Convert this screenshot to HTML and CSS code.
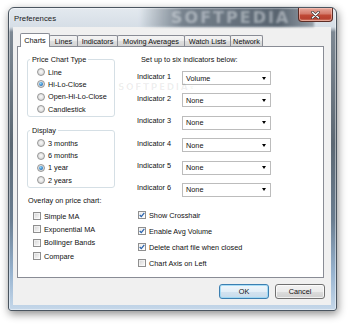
FILE: index.html
```html
<!DOCTYPE html>
<html>
<head>
<meta charset="utf-8">
<title>Preferences</title>
<link rel="stylesheet" href="styles.css">
</head>
<body>
<div class="window">
  <div class="glass-mark">SOFTPEDIA</div>
  <div class="titlebar">
    <span class="title">Preferences</span>
    <div class="close" aria-label="Close">
      <svg width="9" height="8" viewBox="0 0 9 8"><path d="M1.5 1.2 L7.5 6.8 M7.5 1.2 L1.5 6.8" stroke="#3a3a3a" stroke-width="2.6" stroke-linecap="round"/><path d="M1.5 1.2 L7.5 6.8 M7.5 1.2 L1.5 6.8" stroke="#ffffff" stroke-width="1.4" stroke-linecap="round"/></svg>
    </div>
  </div>
  <div class="client">
    <div class="tabs">
      <div class="tab active t1">Charts</div>
      <div class="tab t2">Lines</div>
      <div class="tab t3">Indicators</div>
      <div class="tab t4">Moving Averages</div>
      <div class="tab t5">Watch Lists</div>
      <div class="tab t6">Network</div>
    </div>
    <div class="panel">
      <div class="col-left">
        <fieldset class="group">
          <legend>Price Chart Type</legend>
          <div class="opt"><span class="radio"></span>Line</div>
          <div class="opt"><span class="radio on"></span>Hi-Lo-Close</div>
          <div class="opt"><span class="radio"></span>Open-Hi-Lo-Close</div>
          <div class="opt"><span class="radio"></span>Candlestick</div>
        </fieldset>
        <fieldset class="group display">
          <legend>Display</legend>
          <div class="opt"><span class="radio"></span>3 months</div>
          <div class="opt"><span class="radio"></span>6 months</div>
          <div class="opt"><span class="radio on"></span>1 year</div>
          <div class="opt"><span class="radio"></span>2 years</div>
        </fieldset>
        <div class="overlay-title">Overlay on price chart:</div>
        <div class="checks left-checks">
          <div class="chk"><span class="box"></span>Simple MA</div>
          <div class="chk"><span class="box"></span>Exponential MA</div>
          <div class="chk"><span class="box"></span>Bollinger Bands</div>
          <div class="chk"><span class="box"></span>Compare</div>
        </div>
      </div>
      <div class="col-right">
        <div class="intro">Set up to six indicators below:</div>
        <div class="indicators">
          <div class="ind-row"><span class="ind-label">Indicator 1</span><div class="select"><span>Volume</span><span class="arrow"></span></div></div>
          <div class="ind-row"><span class="ind-label">Indicator 2</span><div class="select"><span>None</span><span class="arrow"></span></div></div>
          <div class="ind-row"><span class="ind-label">Indicator 3</span><div class="select"><span>None</span><span class="arrow"></span></div></div>
          <div class="ind-row"><span class="ind-label">Indicator 4</span><div class="select"><span>None</span><span class="arrow"></span></div></div>
          <div class="ind-row"><span class="ind-label">Indicator 5</span><div class="select"><span>None</span><span class="arrow"></span></div></div>
          <div class="ind-row"><span class="ind-label">Indicator 6</span><div class="select"><span>None</span><span class="arrow"></span></div></div>
        </div>
        <div class="checks right-checks">
          <div class="chk"><span class="box on"><svg width="6" height="6" viewBox="0 0 6 6"><path d="M0.7 3 L2.3 4.7 L5.3 0.9" fill="none" stroke="#2560ad" stroke-width="1.2"/></svg></span>Show Crosshair</div>
          <div class="chk"><span class="box on"><svg width="6" height="6" viewBox="0 0 6 6"><path d="M0.7 3 L2.3 4.7 L5.3 0.9" fill="none" stroke="#2560ad" stroke-width="1.2"/></svg></span>Enable Avg Volume</div>
          <div class="chk"><span class="box on"><svg width="6" height="6" viewBox="0 0 6 6"><path d="M0.7 3 L2.3 4.7 L5.3 0.9" fill="none" stroke="#2560ad" stroke-width="1.2"/></svg></span>Delete chart file when closed</div>
          <div class="chk"><span class="box"></span>Chart Axis on Left</div>
        </div>
      </div>
      <div class="watermark">SOFTPEDIA<span class="wm-reg">®</span></div>
    </div>
    <div class="buttons">
      <div class="btn default">OK</div>
      <div class="btn">Cancel</div>
    </div>
  </div>
</div>
</body>
</html>
```

FILE: styles.css
```css
* { box-sizing: border-box; }

html, body {
  margin: 0;
  padding: 0;
}

body {
  width: 350px;
  height: 324px;
  overflow: hidden;
  background: #ffffff;
  font-family: "Liberation Sans", Arial, sans-serif;
  font-size: 7.3px;
  line-height: 9px;
  color: #111;
}

.window {
  position: relative;
  margin: 7px 0 0 8px;
  width: 329px;
  height: 304px;
  padding: 0 5px 5px 4px;
  display: flex;
  flex-direction: column;
  border: 1px solid #4a5560;
  border-radius: 6px 6px 3px 3px;
  background:
    linear-gradient(to bottom, #e3e9ef 0px, #d6dee6 19px, #7d8893 24px, #5c6873 45%, #6a7d90 70%, #98b4d0 88%, #c6d8ea 100%);
  box-shadow: 1px 3px 8px rgba(0, 0, 0, 0.45), inset 0 0 0 1px rgba(255, 255, 255, 0.45);
}

.glass-mark {
  position: absolute;
  left: 130px;
  top: 0;
  width: 175px;
  height: 19px;
  background: linear-gradient(to right, rgba(110, 122, 134, 0) 0%, rgba(100, 112, 124, 0.85) 25%, rgba(80, 92, 104, 0.95) 80%, rgba(110, 120, 130, 0.6) 100%);
  color: rgba(235, 240, 245, 0.45);
  font-family: "DejaVu Sans", sans-serif;
  font-weight: bold;
  font-size: 16px;
  line-height: 20px;
  letter-spacing: 2px;
  padding-left: 32px;
  filter: blur(0.8px);
  overflow: hidden;
}

.titlebar {
  position: relative;
  height: 19px;
  display: flex;
  align-items: center;
  justify-content: space-between;
}

.title {
  margin-left: 1px;
  margin-top: 1px;
  font-size: 7.8px;
  color: #1a1a1a;
}

.close {
  align-self: flex-start;
  margin-right: -2px;
  width: 35px;
  height: 14px;
  display: flex;
  align-items: center;
  justify-content: center;
  border: 1px solid #5c2c25;
  border-top: none;
  border-radius: 0 0 4px 4px;
  background: linear-gradient(to bottom, #e8a99c 0%, #d47b6b 45%, #c04a36 55%, #b8412f 80%, #d0806a 100%);
  box-shadow: inset 0 0 0 1px rgba(255, 210, 200, 0.5);
}

.client {
  flex: 1;
  display: flex;
  flex-direction: column;
  background: #f0f0f0;
  padding: 6px 7px 6px 4px;
}

.tabs {
  position: relative;
  z-index: 2;
  height: 13px;
  display: flex;
  align-items: flex-end;
  padding-left: 3px;
}

.tab {
  height: 11px;
  display: flex;
  align-items: center;
  justify-content: center;
  border: 1px solid #898c95;
  border-bottom: none;
  margin-right: -1px;
  border-radius: 2px 2px 0 0;
  background: linear-gradient(to bottom, #f4f4f4 0%, #ececec 50%, #dfdfdf 51%, #d4d4d4 100%);
  white-space: nowrap;
}

.tab.active {
  position: relative;
  z-index: 3;
  height: 14px;
  margin-bottom: -1px;
  padding-bottom: 1px;
  background: #ffffff;
}

.t1 { width: 30px; }
.t2 { width: 29px; }
.t3 { width: 41px; }
.t4 { width: 68px; }
.t5 { width: 47px; }
.t6 { width: 33px; }

.panel {
  position: relative;
  flex: 1;
  display: flex;
  background: #ffffff;
  border: 1px solid #898c95;
  padding: 8px 0 0 9px;
}

.col-left {
  width: 88px;
  display: flex;
  flex-direction: column;
}

.group {
  margin: 0;
  padding: 2px 0 1px 2px;
  border: 1px solid #d5dfe5;
  border-radius: 3px;
  min-width: 0;
}

.group legend {
  padding: 0 2px;
  line-height: 9px;
}

.group.display {
  margin-top: 9px;
}

.opt {
  height: 12.3px;
  display: flex;
  align-items: center;
  margin-left: 7px;
  white-space: nowrap;
}

.radio {
  width: 8px;
  height: 8px;
  margin-right: 3px;
  flex: none;
  border-radius: 50%;
  border: 1px solid #979797;
  background: radial-gradient(circle at 50% 45%, #fafafa 0%, #e6e6e6 45%, #c9c9c9 100%);
  display: flex;
  align-items: center;
  justify-content: center;
}

.radio.on::after {
  content: "";
  width: 4px;
  height: 4px;
  border-radius: 50%;
  background: radial-gradient(circle at 40% 35%, #9fdcf8 0%, #3b8fd4 50%, #174f90 100%);
}

.overlay-title {
  margin-top: 8px;
  margin-left: 1px;
  white-space: nowrap;
}

.checks {
  display: flex;
  flex-direction: column;
}

.chk {
  display: flex;
  align-items: center;
  white-space: nowrap;
}

.left-checks {
  margin-top: 4px;
}

.left-checks .chk {
  height: 13.4px;
  margin-left: 6px;
}

.box {
  width: 8px;
  height: 8px;
  margin-right: 3px;
  flex: none;
  border: 1px solid #8f8f8f;
  background: linear-gradient(135deg, #d2d2d2 0%, #e8e8e8 50%, #fbfbfb 100%);
  box-shadow: inset 0 0 0 1px rgba(255, 255, 255, 0.5);
  display: flex;
  align-items: center;
  justify-content: center;
}

.box.on {
  background: linear-gradient(135deg, #e4e4e4 0%, #f4f4f4 60%, #ffffff 100%);
}

.col-right {
  margin-left: 22px;
  display: flex;
  flex-direction: column;
}

.intro {
  margin-left: 4px;
  white-space: nowrap;
}

.indicators {
  margin-top: 7px;
  display: flex;
  flex-direction: column;
  gap: 8.4px;
}

.ind-row {
  display: flex;
  align-items: flex-start;
}

.ind-label {
  width: 45px;
  flex: none;
  margin-top: 0.5px;
  white-space: nowrap;
}

.select {
  width: 89px;
  height: 14px;
  display: flex;
  align-items: center;
  justify-content: space-between;
  padding: 0 4px 0 3px;
  border: 1px solid #bcbcbc;
  background: #ffffff;
}

.arrow {
  width: 0;
  height: 0;
  border-left: 2.5px solid transparent;
  border-right: 2.5px solid transparent;
  border-top: 3px solid #000000;
}

.right-checks {
  margin-top: 10.5px;
}

.right-checks .chk {
  height: 16px;
  margin-left: 1px;
}

.watermark {
  position: absolute;
  left: 100px;
  top: 37px;
  pointer-events: none;
  font-family: "DejaVu Sans", sans-serif;
  font-weight: bold;
  font-size: 9px;
  line-height: 7px;
  letter-spacing: 1.6px;
  color: rgba(0, 0, 0, 0.07);
}

.wm-reg {
  font-size: 5px;
  vertical-align: top;
  letter-spacing: 0;
}

.buttons {
  height: 15px;
  margin-top: 6px;
  display: flex;
  justify-content: flex-end;
  gap: 6px;
  margin-right: -1px;
}

.btn {
  width: 50px;
  height: 15px;
  display: flex;
  align-items: center;
  justify-content: center;
  border: 1px solid #707070;
  border-radius: 3px;
  background: linear-gradient(to bottom, #f2f2f2 0%, #ebebeb 50%, #dddddd 51%, #cfcfcf 100%);
  box-shadow: inset 0 0 0 1px rgba(255, 255, 255, 0.7);
}

.btn.default {
  border-color: #3c7fb1;
  background: linear-gradient(to bottom, #f0f7fc 0%, #e3eef7 50%, #d3e3f0 51%, #c8dbeb 100%);
  box-shadow: inset 0 0 0 1px rgba(150, 215, 245, 0.8);
}
```
